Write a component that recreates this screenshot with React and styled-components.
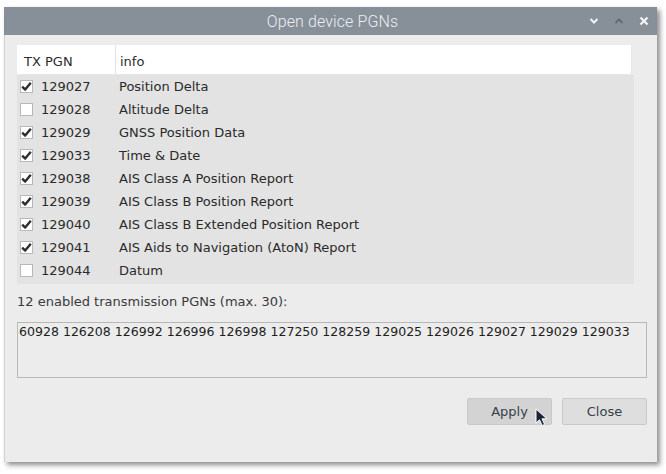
import React from "react";
import styled, { createGlobalStyle } from "styled-components";

const Global = createGlobalStyle`
  html, body { margin: 0; padding: 0; background: #ffffff; }
  body { font-family: "DejaVu Sans", sans-serif; }
`;

const Stage = styled.div`
  width: 666px;
  height: 474px;
  position: relative;
  overflow: hidden;
  padding: 7px 0 0 4px;
  box-sizing: border-box;
`;

const Window = styled.div`
  width: 653px;
  height: 455px;
  display: flex;
  flex-direction: column;
  background: #ececec;
  box-shadow: 3px 3px 5px rgba(0, 0, 0, 0.45);
`;

const TitleBar = styled.div`
  height: 28px;
  flex: none;
  background: #878f98;
  position: relative;
  display: flex;
  align-items: center;
  justify-content: center;
`;

const Title = styled.div`
  font-family: Roboto, "Liberation Sans", sans-serif;
  font-weight: 300;
  font-size: 16px;
  color: #eceef0;
  letter-spacing: 0.1px;
  margin-left: 4px;
`;

const Controls = styled.div`
  position: absolute;
  right: 8px;
  top: 0;
  height: 28px;
  display: flex;
  align-items: center;
  gap: 15px;
`;

const Body = styled.div`
  flex: 1;
  display: flex;
  flex-direction: column;
  padding: 10px 10px 0 12px;
  border-left: 1px solid #d2d2d2;
  box-sizing: border-box;
`;

const Table = styled.div`
  width: 617px;
  display: flex;
  flex-direction: column;
`;

const HeaderRow = styled.div`
  height: 30px;
  display: flex;
  background: #ffffff;
  border-bottom: 1px solid #e6e6e6;
  box-sizing: border-box;
  margin-right: 2px;
  border-right: 1px solid #e8e8e8;
`;

const HeaderCell = styled.div`
  width: ${(p) => p.$w || "auto"};
  flex: ${(p) => (p.$w ? "none" : 1)};
  display: flex;
  align-items: center;
  padding-left: ${(p) => p.$pl}px;
  padding-top: 3px;
  font-size: 13px;
  color: #2c2c2c;
  box-sizing: border-box;
  border-right: ${(p) => (p.$sep ? "1px solid #e4e4e4" : "none")};
`;

const Rows = styled.div`
  background: #e3e3e3;
  padding-bottom: 2px;
`;

const Row = styled.div`
  height: 23px;
  display: flex;
  align-items: center;
  font-size: 13px;
  color: #2a2a2a;
`;

const Box = styled.div`
  width: 13px;
  height: 13px;
  background: #ffffff;
  border: 1px solid #b8b8b8;
  box-sizing: border-box;
  margin-left: 3px;
  margin-right: 8px;
  display: flex;
  align-items: center;
  justify-content: center;
`;

const PgnCell = styled.div`
  width: 78px;
`;

const Label = styled.div`
  margin-top: 10px;
  font-size: 13px;
  color: #3a3a3a;
  height: 16px;
  line-height: 16px;
`;

const TextArea = styled.div`
  margin-top: 12px;
  width: 630px;
  height: 56px;
  border: 1px solid #b7b7b7;
  box-sizing: border-box;
  padding: 1px 1px;
  font-size: 12.56px;
  line-height: 15px;
  color: #1e1e1e;
  white-space: nowrap;
`;

const ButtonBar = styled.div`
  margin-top: 20px;
  width: 630px;
  display: flex;
  justify-content: flex-end;
  gap: 10px;
`;

const Button = styled.div`
  width: 85px;
  height: 27px;
  box-sizing: border-box;
  border: 1px solid #c9c9c9;
  border-radius: 2px;
  background: ${(p) => (p.$hover ? "#d3d3d3" : "#dedede")};
  display: flex;
  align-items: center;
  justify-content: center;
  font-size: 13px;
  color: #36404c;
`;

const Cursor = styled.svg`
  position: absolute;
  left: 535px;
  top: 408px;
`;

const Check = () => (
  <svg width="11" height="11" viewBox="0 0 11 11">
    <path d="M1.2 5.6 L4.2 8.6 L9.8 1.8" fill="none" stroke="#2e2e2e" strokeWidth="2.4" strokeLinejoin="round" />
  </svg>
);

const rows = [
  [true, "129027", "Position Delta"],
  [false, "129028", "Altitude Delta"],
  [true, "129029", "GNSS Position Data"],
  [true, "129033", "Time & Date"],
  [true, "129038", "AIS Class A Position Report"],
  [true, "129039", "AIS Class B Position Report"],
  [true, "129040", "AIS Class B Extended Position Report"],
  [true, "129041", "AIS Aids to Navigation (AtoN) Report"],
  [false, "129044", "Datum"],
];

export default function App() {
  return (
    <>
      <Global />
      <Stage>
        <Window>
          <TitleBar>
            <Title>Open device PGNs</Title>
            <Controls>
              <svg width="10" height="8" viewBox="0 0 10 8">
                <path d="M1.5 2 L5 5.5 L8.5 2" fill="none" stroke="#f2f2f2" strokeWidth="2" />
              </svg>
              <svg width="10" height="8" viewBox="0 0 10 8">
                <path d="M1.5 6 L5 2.5 L8.5 6" fill="none" stroke="#626a73" strokeWidth="2" />
              </svg>
              <svg width="10" height="10" viewBox="0 0 10 10">
                <path d="M1.5 1.5 L8.5 8.5 M8.5 1.5 L1.5 8.5" fill="none" stroke="#f4f4f4" strokeWidth="2.2" />
              </svg>
            </Controls>
          </TitleBar>
          <Body>
            <Table>
              <HeaderRow>
                <HeaderCell $w="99px" $pl={7} $sep>TX PGN</HeaderCell>
                <HeaderCell $pl={4}>info</HeaderCell>
              </HeaderRow>
              <Rows>
                {rows.map(([on, pgn, info]) => (
                  <Row key={pgn}>
                    <Box>{on && <Check />}</Box>
                    <PgnCell>{pgn}</PgnCell>
                    <div>{info}</div>
                  </Row>
                ))}
              </Rows>
            </Table>
            <Label>12 enabled transmission PGNs (max. 30):</Label>
            <TextArea>
              60928 126208 126992 126996 126998 127250 128259 129025 129026 129027 129029 129033
            </TextArea>
            <ButtonBar>
              <Button $hover>Apply</Button>
              <Button>Close</Button>
            </ButtonBar>
          </Body>
        </Window>
        <Cursor width="14" height="20" viewBox="0 0 14 20">
          <path d="M1 1 L1 15 L4.5 11.8 L7.2 17.5 L9.6 16.4 L7 10.8 L11.8 10.8 Z" fill="#1b2238" stroke="#ffffff" strokeWidth="1" strokeLinejoin="round" />
        </Cursor>
      </Stage>
    </>
  );
}
